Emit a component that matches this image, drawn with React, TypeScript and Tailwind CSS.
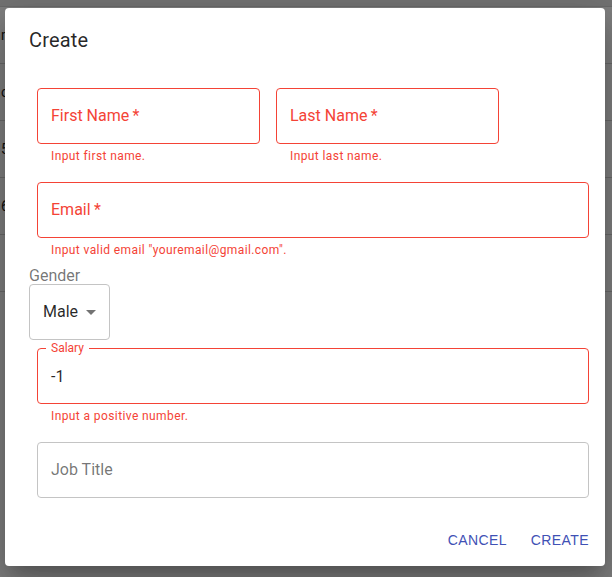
import React from "react";

function Field({
  label,
  required,
  error,
  value,
  helper,
  widthClass,
}: {
  label: string;
  required?: boolean;
  error?: boolean;
  value?: string;
  helper?: string;
  widthClass: string;
}) {
  const shrink = !!value;
  return (
    <div className={`m-2 flex flex-col ${widthClass}`}>
      <div
        className={`relative h-[56px] rounded-[4px] border ${
          error ? "border-[#f44336]" : "border-[#c4c4c4]"
        }`}
      >
        {shrink ? (
          <span
            className={`absolute left-[8px] top-[-7px] bg-white px-[5px] text-[12px] leading-[12px] ${
              error ? "text-[#f44336]" : "text-black/55"
            }`}
          >
            {label}
            {required ? "\u2009*" : ""}
          </span>
        ) : (
          <span
            className={`absolute left-[13px] top-[19px] text-[16px] leading-[16px] ${
              error ? "text-[#f44336]" : "text-black/55"
            }`}
          >
            {label}
            {required ? "\u2009*" : ""}
          </span>
        )}
        {value ? (
          <div className="flex h-full items-center px-[13px] text-[16px] leading-[19px] text-black/85">
            {value}
          </div>
        ) : null}
      </div>
      {helper ? (
        <p className="mx-[14px] mt-[3px] text-[12px] leading-[19px] tracking-[0.4px] text-[#f44336]">
          {helper}
        </p>
      ) : null}
    </div>
  );
}

export default function App() {
  const rows = ["m", "o", "5", "6", ""];
  return (
    <div className="relative h-[577px] w-[612px] overflow-hidden bg-white font-[Roboto,Arial,sans-serif]">
      {/* background table */}
      <div className="flex flex-col">
        <div className="h-[6px] bg-[#e6e6e6]" />
        {rows.map((r, i) => (
          <div
            key={i}
            className="flex h-[57px] items-center border-t border-[#d4d4d4] text-[14px] text-[#222]"
          >
            <span className="pl-px">{r}</span>
          </div>
        ))}
        <div className="border-t border-[#d4d4d4]" />
      </div>

      {/* backdrop */}
      <div className="absolute inset-0 bg-black/50" />

      {/* dialog */}
      <div className="absolute left-[5px] top-[8px] flex w-[600px] flex-col rounded-[4px] bg-white shadow-[0px_11px_15px_-7px_rgba(0,0,0,0.2),0px_24px_38px_3px_rgba(0,0,0,0.14),0px_9px_46px_8px_rgba(0,0,0,0.12)]">
        <div className="px-6 py-4">
          <h2 className="text-[20px] font-normal leading-[32px] tracking-[0.15px] text-black/85">
            Create
          </h2>
        </div>
        <div className="flex flex-col px-6 py-2">
          <div className="flex">
            <Field
              label="First Name"
              required
              error
              helper="Input first name."
              widthClass="w-[223px]"
            />
            <Field
              label="Last Name"
              required
              error
              helper="Input last name."
              widthClass="w-[223px]"
            />
          </div>
          <Field
            label="Email"
            required
            error
            helper={'Input valid email "youremail@gmail.com".'}
            widthClass="w-[552px]"
          />
          <div className="flex flex-col">
            <span className="text-[16px] leading-[16px] text-black/55">Gender</span>
            <div className="relative flex h-[56px] w-[81px] items-center rounded-[4px] border border-[#c4c4c4] pl-[13px] text-[16px] text-black/85">
              Male
              <svg
                className="absolute right-[6px] top-[15px] h-[24px] w-[24px] fill-black/55"
                viewBox="0 0 24 24"
              >
                <path d="M7 10l5 5 5-5z" />
              </svg>
            </div>
          </div>
          <Field
            label="Salary"
            error
            value="-1"
            helper="Input a positive number."
            widthClass="w-[552px]"
          />
          <Field label="Job Title" widthClass="w-[552px]" />
        </div>
        <div className="flex items-center justify-end gap-2 p-2">
          <button className="h-[36px] min-w-[64px] px-2 py-[6px] font-['Liberation_Sans',Arial,sans-serif] text-[14px] font-normal uppercase leading-[24px] tracking-[0.4px] text-[#3f51b5]">
            Cancel
          </button>
          <button className="h-[36px] min-w-[64px] px-2 py-[6px] font-['Liberation_Sans',Arial,sans-serif] text-[14px] font-normal uppercase leading-[24px] tracking-[0.4px] text-[#3f51b5]">
            Create
          </button>
        </div>
      </div>
    </div>
  );
}
